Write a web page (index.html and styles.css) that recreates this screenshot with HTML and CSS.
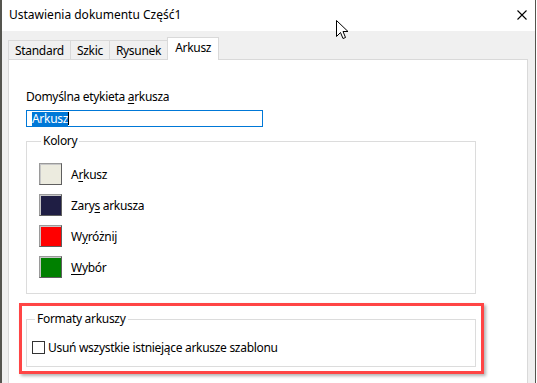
FILE: index.html
```html
<!DOCTYPE html>
<html lang="pl">
<head>
<meta charset="utf-8">
<title>Ustawienia dokumentu Część1</title>
<link rel="stylesheet" href="styles.css">
</head>
<body>
<div class="window">
  <div class="titlebar">
    <span class="title">Ustawienia dokumentu Część1</span>
    <svg class="close" width="10" height="10" viewBox="0 0 10 10"><path d="M0.5 0.5 L9.5 9.5 M9.5 0.5 L0.5 9.5" stroke="#000" stroke-width="1.1" fill="none"/></svg>
  </div>
  <div class="client">
    <div class="tabs">
      <div class="tab">Standard</div>
      <div class="tab">Szkic</div>
      <div class="tab">Rysunek</div>
      <div class="tab active">Arkusz</div>
    </div>
    <div class="panel">
      <div class="field-label">Domyślna etykieta <u>a</u>rkusza</div>
      <div class="textbox"><span class="sel">Arkusz</span><span class="caret"></span></div>
      <fieldset class="group colors">
        <legend>Kolory</legend>
        <div class="color-row"><span class="swatch" style="background:#ecebdf"></span><span>A<u>r</u>kusz</span></div>
        <div class="color-row"><span class="swatch" style="background:#1f1e44"></span><span>Zary<u>s</u> arkusza</span></div>
        <div class="color-row"><span class="swatch" style="background:#ff0000"></span><span>W<u>y</u>różnij</span></div>
        <div class="color-row"><span class="swatch" style="background:#008000"></span><span><u>W</u>ybór</span></div>
      </fieldset>
      <fieldset class="group formats">
        <legend>Formaty arkuszy</legend>
        <label class="check"><span class="box"></span><span>Usuń wszystkie istniejące arkusze szablonu</span></label>
      </fieldset>
      <div class="highlight"></div>
    </div>
  </div>
  <svg class="cursor" width="13" height="20" viewBox="0 0 13 20"><path d="M0.5 0.5 L0.5 16.5 L4.5 12.5 L7 18.5 L9.5 17.5 L7 11.5 L12 11.5 Z" fill="#fff" stroke="#000" stroke-width="1"/></svg>
</div>
</body>
</html>
```

FILE: styles.css
```css
html, body {
  margin: 0;
  padding: 0;
  background: #ffffff;
}
body {
  font-family: "Noto Sans", "Open Sans", sans-serif;
  font-size: 12px;
  color: #000;
  width: 537px;
  height: 383px;
  overflow: hidden;
}
.window {
  position: relative;
  width: 536px;
  height: 383px;
  box-sizing: border-box;
  border-left: 2px solid #55554f;
  border-right: 1px solid #55554f;
  display: flex;
  flex-direction: column;
}
.titlebar {
  height: 31px;
  flex: none;
  background: #fff;
  display: flex;
  align-items: center;
  justify-content: space-between;
  padding: 0 8px 0 7px;
}
.title {
  line-height: 16px;
  margin-top: -1px;
}
.close {
  display: block;
  margin-top: -1px;
}
.client {
  flex: 1;
  background: #f0f0f0;
  padding: 6px 7px 0 6px;
  display: flex;
  flex-direction: column;
  min-height: 0;
}
.tabs {
  display: flex;
  align-items: flex-end;
  height: 23px;
  flex: none;
  position: relative;
  z-index: 1;
  margin-bottom: -1px;
  letter-spacing: -0.3px;
}
.tab {
  height: 19px;
  box-sizing: border-box;
  border: 1px solid #d9d9d9;
  border-bottom: none;
  border-right: none;
  background: #f0f0f0;
  padding: 0 6px;
  line-height: 19px;
  margin-bottom: 1px;
}
.tab.active {
  height: 23px;
  background: #fff;
  border-right: 1px solid #d9d9d9;
  line-height: 19px;
  margin-bottom: 0;
  padding: 0 7px;
}
.panel {
  position: relative;
  flex: 1;
  background: #fff;
  border: 1px solid #d9d9d9;
  border-bottom: none;
  padding: 29px 0 0 17px;
  letter-spacing: -0.3px;
}
.field-label {
  line-height: 16px;
}
.field-label u, .color-row u {
  text-underline-offset: 2px;
}
.textbox {
  margin-top: 5px;
  width: 237px;
  height: 17px;
  box-sizing: border-box;
  border: 1px solid #0078d7;
  padding: 0 0 0 5px;
  display: flex;
  align-items: center;
  line-height: 15px;
}
.sel {
  background: #0078d7;
  color: #fff;
  line-height: 14px;
}
.caret {
  width: 1px;
  height: 13px;
  background: #000;
}
.group {
  margin: 0;
  border: 1px solid #dcdcdc;
  padding: 0;
  width: 450px;
  box-sizing: border-box;
  min-width: 0;
}
.group legend {
  padding: 0 2px;
  margin-left: 2px;
  line-height: 14px;
}
.colors {
  margin-top: 7px;
  height: 160px;
  padding: 15px 0 0 12px;
}
.color-row {
  display: flex;
  align-items: center;
  gap: 9px;
  height: 22px;
  margin-bottom: 9px;
}
.swatch {
  width: 23px;
  height: 22px;
  box-sizing: border-box;
  border: 1px solid;
  border-color: #9a9a9a #5f5f5f #5f5f5f #9a9a9a;
  box-shadow: inset 1px 1px 0 #c8c8c8;
}
.formats {
  margin-top: 18px;
  height: 55px;
  padding: 13px 0 0 5px;
}
.formats legend {
  margin-left: 3px;
}
.check {
  display: flex;
  align-items: center;
  gap: 3px;
}
.box {
  width: 13px;
  height: 13px;
  box-sizing: border-box;
  border: 1px solid #333;
  background: #fff;
}
.highlight {
  position: absolute;
  left: 10px;
  top: 243px;
  width: 465px;
  height: 71px;
  box-sizing: border-box;
  border: 3px solid #ff4545;
  box-shadow: 2px 2px 3px rgba(0,0,0,0.3);
  pointer-events: none;
}
.cursor {
  position: absolute;
  left: 334px;
  top: 20px;
}
```
